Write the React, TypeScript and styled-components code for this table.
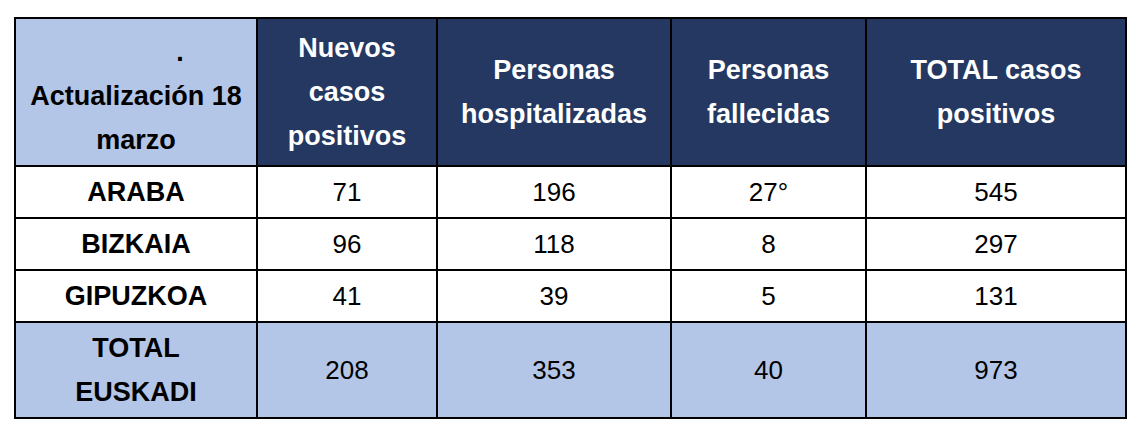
import React from 'react';
import styled, { createGlobalStyle } from 'styled-components';

const GlobalStyle = createGlobalStyle`
  html, body {
    margin: 0;
    padding: 0;
    background: #ffffff;
  }
  body {
    font-family: "Liberation Sans", Arial, sans-serif;
    color: #000000;
  }
`;

const NAVY = '#243862';
const LIGHT = '#b4c6e7';

const Page = styled.div`
  padding: 17px 0 0 14px;
`;

const Table = styled.table`
  border-collapse: collapse;
  table-layout: fixed;
  width: 1111px;
`;

const Col = styled.col<{ $w: number }>`
  width: ${(p) => p.$w}px;
`;

const HeadCell = styled.th<{ $light?: boolean }>`
  border: 2px solid #000;
  background: ${(p) => (p.$light ? LIGHT : NAVY)};
  color: ${(p) => (p.$light ? '#000' : '#fff')};
  font-size: 27px;
  font-weight: bold;
  line-height: 44px;
  text-align: center;
  vertical-align: middle;
  padding: ${(p) => (p.$light ? '8px 2px 0' : '0 2px')};
  height: ${(p) => (p.$light ? '138px' : '146px')};
`;

const Dot = styled.span`
  display: block;
  padding-left: 88px;
`;

const Row = styled.tr<{ $total?: boolean }>`
  background: ${(p) => (p.$total ? LIGHT : '#fff')};
`;

const Label = styled.td<{ $tall?: boolean }>`
  border: 2px solid #000;
  font-size: 27px;
  font-weight: bold;
  line-height: 44px;
  text-align: center;
  vertical-align: middle;
  padding: 0;
  height: ${(p) => (p.$tall ? '94px' : '50px')};
`;

const Value = styled.td`
  border: 2px solid #000;
  font-size: 26px;
  line-height: 30px;
  text-align: center;
  vertical-align: middle;
  padding: 0;
`;

const widths = [242, 180, 234, 195, 260];

const headers = [
  ['Nuevos', 'casos', 'positivos'],
  ['Personas', 'hospitalizadas'],
  ['Personas', 'fallecidas'],
  ['TOTAL casos', 'positivos'],
];

const rows = [
  { name: ['ARABA'], values: ['71', '196', '27°', '545'] },
  { name: ['BIZKAIA'], values: ['96', '118', '8', '297'] },
  { name: ['GIPUZKOA'], values: ['41', '39', '5', '131'] },
  { name: ['TOTAL', 'EUSKADI'], values: ['208', '353', '40', '973'], total: true },
];

const lines = (parts: string[]) =>
  parts.map((t, i) => (
    <React.Fragment key={i}>
      {i > 0 && <br />}
      {t}
    </React.Fragment>
  ));

export default function App() {
  return (
    <Page>
      <GlobalStyle />
      <Table>
        <colgroup>
          {widths.map((w, i) => (
            <Col key={i} $w={w} />
          ))}
        </colgroup>
        <thead>
          <tr>
            <HeadCell $light>
              <Dot>.</Dot>
              Actualización 18
              <br />
              marzo
            </HeadCell>
            {headers.map((h, i) => (
              <HeadCell key={i}>{lines(h)}</HeadCell>
            ))}
          </tr>
        </thead>
        <tbody>
          {rows.map((r) => (
            <Row key={r.name.join(' ')} $total={r.total}>
              <Label $tall={r.total}>{lines(r.name)}</Label>
              {r.values.map((v, i) => (
                <Value key={i}>{v}</Value>
              ))}
            </Row>
          ))}
        </tbody>
      </Table>
    </Page>
  );
}
